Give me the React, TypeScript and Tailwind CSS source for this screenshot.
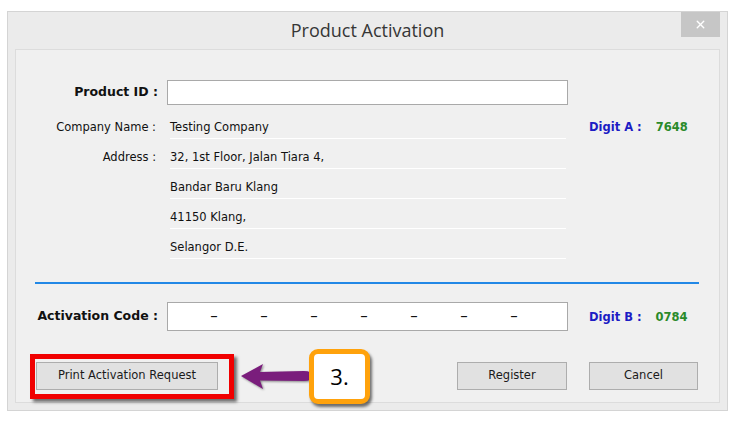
import { X } from "lucide-react";

const addressLines = ["32, 1st Floor, Jalan Tiara 4,", "Bandar Baru Klang", "41150 Klang,", "Selangor D.E."];

function InfoRow({ label, value }: { label: string; value: string }) {
  return (
    <div className="flex h-[30px]">
      <div className="w-[143px] pt-[10px] pr-[3px] text-right">{label}</div>
      <div className="ml-[11px] w-[396px] border-b border-white pt-[10px]">{value}</div>
    </div>
  );
}

function WinButton({ label, className }: { label: string; className: string }) {
  return (
    <button className={`h-[28px] border border-[#adadad] bg-[#e1e1e1] text-[#1a1a1a] ${className}`}>
      {label}
    </button>
  );
}

export default function App() {
  return (
    <div className="min-h-[421px] w-[739px] bg-white pl-[7px] pt-[11px]">
      <div
        className="relative flex h-[400px] w-[721px] flex-col border border-[#d4d4d4] bg-[#ebebeb] px-[7px] pb-[7px] text-[11.5px] text-[#111]"
        style={{ fontFamily: '"DejaVu Sans", Tahoma, sans-serif' }}
      >
        {/* Title bar */}
        <div className="relative flex h-[37px] items-center justify-center">
          <span className="text-[18px] text-[#363636]" style={{ fontFamily: '"Open Sans", "Noto Sans", sans-serif' }}>
            Product Activation
          </span>
          <div className="absolute right-[0px] top-0 flex h-[25px] w-[39px] items-center justify-center bg-[#c6c6c6]">
            <X size={13} strokeWidth={2.6} className="text-white" />
          </div>
        </div>

        {/* Body */}
        <div className="flex-1 border border-[#dcdcdc] bg-[#f0f0f0]">
          <div className="flex pt-[30px]">
            <div className="flex-none">
              <div className="flex h-[25px] items-center">
                <div className="w-[143px] pr-[1px] text-right text-[12.5px] font-bold">Product ID :</div>
                <div className="ml-[8px] h-[25px] w-[401px] border border-[#a9a9a9] bg-white" />
              </div>
              <div className="pt-[4px]">
                <InfoRow label="Company Name :" value="Testing Company" />
                <InfoRow label="Address :" value={addressLines[0]} />
                {addressLines.slice(1).map((line) => (
                  <InfoRow key={line} label="" value={line} />
                ))}
              </div>
            </div>
            <div className="ml-[21px] flex pt-[39px] font-bold">
              <span className="text-[#1c1cc4]">Digit A :</span>
              <span className="ml-[14px] text-[#2a8a2a]">7648</span>
            </div>
          </div>

          {/* Separator */}
          <div className="ml-[19px] mt-[23px] h-[2px] w-[664px] bg-[#2288e6]" />

          <div className="mt-[18px] flex items-center">
            <div className="w-[143px] pr-[1px] text-right text-[12.5px] font-bold">Activation Code :</div>
            <div className="ml-[8px] flex h-[29px] w-[401px] items-center border border-[#a9a9a9] bg-white pl-[21px]">
              {Array(7)
                .fill(0)
                .map((_, i) => (
                  <span key={i} className="w-[50px] text-center text-[15px] leading-none">
                    –
                  </span>
                ))}
            </div>
            <div className="ml-[21px] mt-[3px] flex font-bold">
              <span className="text-[#1c1cc4]">Digit B :</span>
              <span className="ml-[14px] text-[#2a8a2a]">0784</span>
            </div>
          </div>

          <div className="mt-[31px] flex items-center">
            <WinButton label="Print Activation Request" className="ml-[20px] w-[182px]" />
            <WinButton label="Register" className="ml-[239px] w-[110px]" />
            <WinButton label="Cancel" className="ml-[22px] w-[109px]" />
          </div>
        </div>

        {/* Annotations */}
        <div className="absolute left-[22px] top-[342px] h-[45px] w-[204px] border-[5px] border-[#f00000] shadow-[3px_3px_3px_rgba(0,0,0,0.55)]" />
        <svg className="absolute left-[232px] top-[350px]" width="76" height="30" viewBox="0 0 76 30">
          <path
            d="M1 14 L23 2 L20 10 L64 9 Q72 9 72 14 Q72 19 64 19 L20 18.5 L23 27 Z"
            fill="#7a1d7c"
            style={{ filter: "drop-shadow(1px 1px 1px rgba(0,0,0,0.45))" }}
          />
        </svg>
        <div className="absolute left-[301px] top-[337px] flex h-[55px] w-[61px] items-center justify-center rounded-[9px] border-[5px] border-[#ffa20c] bg-white text-[22px] text-black shadow-[2px_3px_3px_rgba(0,0,0,0.55)]" style={{ fontFamily: '"Open Sans", sans-serif' }}>
          3.
        </div>
      </div>
    </div>
  );
}
